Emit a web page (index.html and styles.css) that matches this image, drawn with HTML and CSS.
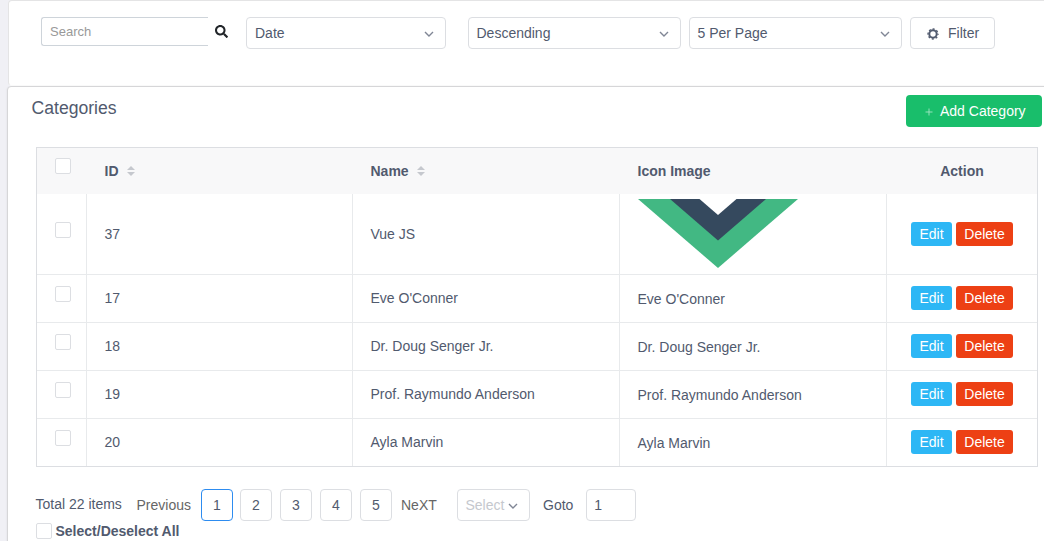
FILE: index.html
```html
<!DOCTYPE html>
<html lang="en">
<head>
<meta charset="utf-8">
<title>Categories</title>
<link rel="stylesheet" href="styles.css">
</head>
<body>
<svg class="defs" width="0" height="0">
  <symbol id="chevron" viewBox="0 0 10 6"><path d="M1 1l4 4 4-4" fill="none" stroke="#808695" stroke-width="1.4"/></symbol>
  <symbol id="sort" viewBox="0 0 8 10"><path d="M0 4l4-4 4 4zM0 6l4 4 4-4z" fill="#c5c8ce"/></symbol>
</svg>
<section class="panel filters">
  <div class="search">Search</div>
  <svg class="search-icon" viewBox="0 0 512 512"><path fill="#212529" d="M505 442.700L405.300 343c-4.500-4.500-10.600-7-17-7H372c27.600-35.300 44-79.700 44-128C416 93.100 322.900 0 208 0S0 93.100 0 208s93.100 208 208 208c48.300 0 92.700-16.400 128-44v16.300c0 6.400 2.500 12.500 7 17l99.700 99.700c9.400 9.400 24.600 9.400 33.900 0l28.300-28.300c9.400-9.400 9.400-24.600.1-34zM208 336c-70.700 0-128-57.200-128-128 0-70.700 57.200-128 128-128 70.700 0 128 57.200 128 128 0 70.700-57.200 128-128 128z"/></svg>
  <div class="select sort-field">Date<svg class="chevron"><use href="#chevron"/></svg></div>
  <div class="select sort-order">Descending<svg class="chevron"><use href="#chevron"/></svg></div>
  <div class="select page-size">5 Per Page<svg class="chevron"><use href="#chevron"/></svg></div>
  <div class="filter-btn"><svg class="gear" viewBox="0 0 12 12"><g fill="none" stroke="#515a6e"><circle cx="6" cy="6" r="3.700" stroke-width="2"/><circle cx="6" cy="6" r="5" stroke-width="1.300" stroke-dasharray="2 1.927" stroke-dashoffset="1"/></g></svg>Filter</div>
</section>
<section class="panel listing">
  <header class="head">
    <h1 class="title">Categories</h1>
    <div class="add-btn"><svg class="plus" viewBox="0 0 8 8"><path d="M4 .5v7M.5 4h7" stroke="#a3e5c4" stroke-width=".9"/></svg>Add Category</div>
  </header>
  <div class="table">
    <div class="row row-head"><div class="check"><i class="box"></i></div><div class="cell">ID<svg class="sort"><use href="#sort"/></svg></div><div class="cell">Name<svg class="sort"><use href="#sort"/></svg></div><div class="cell">Icon Image</div><div class="cell actions">Action</div></div>
    <div class="row row-tall"><div class="check"><i class="box"></i></div><div class="cell">37</div><div class="cell">Vue JS</div><div class="cell cell-logo"><svg class="logo" viewBox="0 0 160 70"><path fill="#42b883" d="M0 0h160L80 69z"/><path fill="#35495e" d="M32 0h96L80 41.500z"/><path fill="#fff" d="M61.500 0h37L80 16z"/></svg></div><div class="cell actions"><span class="btn edit">Edit</span><span class="btn delete">Delete</span></div></div>
    <div class="row"><div class="check"><i class="box"></i></div><div class="cell">17</div><div class="cell">Eve O'Conner</div><div class="cell alt">Eve O'Conner</div><div class="cell actions"><span class="btn edit">Edit</span><span class="btn delete">Delete</span></div></div>
    <div class="row"><div class="check"><i class="box"></i></div><div class="cell">18</div><div class="cell">Dr. Doug Senger Jr.</div><div class="cell alt">Dr. Doug Senger Jr.</div><div class="cell actions"><span class="btn edit">Edit</span><span class="btn delete">Delete</span></div></div>
    <div class="row"><div class="check"><i class="box"></i></div><div class="cell">19</div><div class="cell">Prof. Raymundo Anderson</div><div class="cell alt">Prof. Raymundo Anderson</div><div class="cell actions"><span class="btn edit">Edit</span><span class="btn delete">Delete</span></div></div>
    <div class="row row-last"><div class="check"><i class="box"></i></div><div class="cell">20</div><div class="cell">Ayla Marvin</div><div class="cell alt">Ayla Marvin</div><div class="cell actions"><span class="btn edit">Edit</span><span class="btn delete">Delete</span></div></div>
  </div>
  <nav class="pager">
    <span class="total">Total 22 items</span>
    <span class="prev">Previous</span>
    <span class="page active">1</span><span class="page">2</span><span class="page">3</span><span class="page">4</span><span class="page">5</span>
    <span class="next">NeXT</span>
    <div class="select jump">Select<svg class="chevron"><use href="#chevron"/></svg></div>
    <span class="goto">Goto</span>
    <div class="goto-input">1</div>
  </nav>
  <div class="select-all"><i class="box"></i>Select/Deselect All</div>
</section>
</body>
</html>
```
FILE: styles.css
```css
* { box-sizing: border-box; }
body {
  margin: 0;
  height: 541px;
  overflow: hidden;
  padding-left: 8px;
  background: #f0f0f5;
  color: #515a6e;
  font: 14px/20px "Liberation Sans", Arial, sans-serif;
}
.defs { display: block; height: 0; }
.panel { background: #fff; width: 1060px; border: 1px solid #e4e4e5; }
.filters {
  display: flex;
  align-items: flex-start;
  height: 86px;
  padding: 16px 0 0 32px;
  border-bottom-color: #fafafa;
  border-radius: 4px;
}
.search {
  width: 167px;
  height: 29px;
  padding: 0 8px;
  border: 1px solid #ced4da;
  border-right: 0;
  border-radius: 3px 0 0 3px;
  color: #999;
  font-size: 13px;
  line-height: 28px;
}
.search-icon { width: 13px; height: 13px; margin: 8px 17px 0 7px; }
.select {
  display: flex;
  align-items: center;
  justify-content: space-between;
  height: 32px;
  padding: 0 11px 0 8px;
  border: 1px solid #dcdee2;
  border-radius: 4px;
}
.chevron { width: 10px; height: 6px; margin-top: 2px; }
.sort-field { width: 200px; margin: 0 22px 0 1px; }
.sort-order { width: 213px; margin-right: 8px; padding-left: 7.500px; }
.page-size { width: 213px; margin-right: 8px; padding-left: 7.500px; }
.filter-btn {
  display: flex;
  align-items: center;
  width: 85px;
  height: 32px;
  padding-left: 16px;
  border: 1px solid #dcdee2;
  border-radius: 4px;
}
.gear { width: 12px; height: 12px; margin: 1px 9px 0 0; }
.listing {
  width: 1061px;
  height: 470px;
  margin-left: -1px;
  padding-left: 28px;
  border-color: #d6d6d8;
  border-radius: 4px;
  box-shadow: 0 1px 2px rgba(0, 0, 0, .1);
}
.head { display: flex; justify-content: space-between; height: 60px; width: 1006px; }
.title { margin: 10px 0 0 -4.500px; font-size: 17.600px; font-weight: 400; line-height: 22px; }
.add-btn {
  display: flex;
  align-items: center;
  width: 136px;
  height: 32px;
  margin-top: 8px;
  padding-left: 19px;
  border-radius: 4px;
  background: #19be6b;
  color: #fff;
}
.plus { width: 8px; height: 8px; margin: 1px 7px 0 0; }
.table { width: 1002px; border: 1px solid #dcdee2; }
.row { display: grid; grid-template-columns: 50px 266px 267px 267px 150px; height: 48px; }
.row > div { border-right: 1px solid #e8eaec; border-bottom: 1px solid #e8eaec; }
.row > div:last-child { border-right: 0; }
.row > .cell { padding-bottom: 1px; }
.row-head { height: 46px; background: #f8f8f9; font-weight: 700; }
.row-head > div.cell, .row-head > div.check { border-color: #f8f8f9; padding-bottom: 0; }
.row-head > div.check { padding-bottom: 9px; }
.row-tall { height: 81px; }
.row-last { height: 47px; }
.row-last > div { border-bottom: 0; }
.cell { display: flex; align-items: center; padding-left: 17.500px; white-space: nowrap; }
.alt { padding-top: 2px; }
.cell-logo { align-items: flex-start; padding: 5px 0 0 18px; }
.logo { width: 160px; height: 70px; }
.sort { width: 8px; height: 10px; margin-left: 8px; }
.check { display: flex; align-items: center; padding: 0 0 9px 18px; }
.box { flex: none; width: 16px; height: 16px; border: 1px solid #dcdee2; border-radius: 2px; background: #fff; }
.actions { justify-content: center; gap: 4px; padding: 0; }
.btn { height: 24px; border-radius: 3px; color: #fff; line-height: 24px; text-align: center; }
.edit { width: 41px; background: #2db7f5; }
.delete { width: 57px; background: #ed4014; }
.pager { display: flex; align-items: center; height: 32px; margin-top: 22px; }
.total { width: 101px; margin: -2px 0 0 -.5px; }
.prev { width: 64.500px; color: #666; }
.page {
  width: 32px;
  height: 32px;
  margin-right: 8px;
  border: 1px solid #dcdee2;
  border-radius: 4px;
  line-height: 30px;
  text-align: center;
}
.page.active { margin-right: 7px; border-color: #2d8cf0; }
.next { width: 56px; margin-left: 1px; color: #666; }
.jump { width: 73px; padding-left: 7.500px; color: #c5c8ce; }
.goto { margin: 0 13px 0 13px; }
.goto-input { width: 50px; height: 32px; padding-left: 7px; border: 1px solid #dcdee2; border-radius: 4px; line-height: 30px; }
.select-all { display: flex; align-items: center; gap: 3.500px; height: 20px; font-weight: 700; }
```
